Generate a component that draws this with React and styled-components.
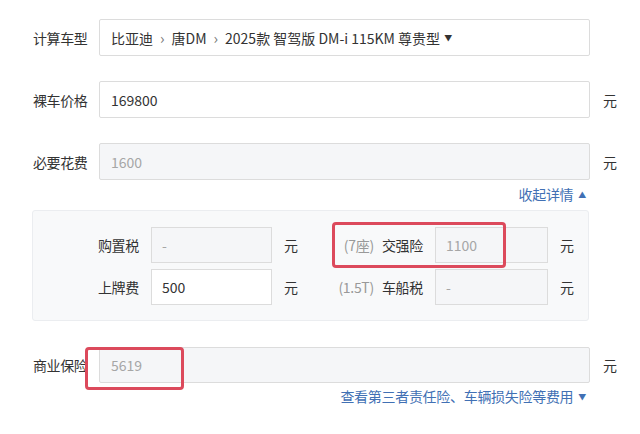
import React from 'react'
import styled, { createGlobalStyle } from 'styled-components'

const GlobalStyle = createGlobalStyle`
  html, body {
    margin: 0;
    padding: 0;
    background: #fff;
  }
  body {
    font-family: "Noto Sans CJK SC", "Noto Sans", sans-serif;
    font-size: 14px;
    color: #333;
  }
`

function App() {
  return (
    <Page>
      <GlobalStyle />

      <FormRow>
        <Label>计算车型</Label>
        <Field>
          <span>比亚迪</span>
          <Crumb>›</Crumb>
          <span>唐DM</span>
          <Crumb>›</Crumb>
          <span>2025款 智驾版 DM-i 115KM 尊贵型</span>
          <Caret>▼</Caret>
        </Field>
      </FormRow>

      <FormRow>
        <Label>裸车价格</Label>
        <Field>169800</Field>
        <Unit>元</Unit>
      </FormRow>

      <FormRow>
        <Label>必要花费</Label>
        <Field disabled>1600</Field>
        <Unit>元</Unit>
      </FormRow>

      <ToggleRow>
        <LinkText>收起详情<Arrow>▲</Arrow></LinkText>
      </ToggleRow>

      <DetailPanel>
        <DetailGrid>
          <SubLabel>购置税</SubLabel>
          <SmallField disabled>-</SmallField>
          <SubUnit>元</SubUnit>
          <SubLabel><Note>(7座)</Note>交强险</SubLabel>
          <SmallField disabled>1100</SmallField>
          <SubUnit>元</SubUnit>

          <SubLabel>上牌费</SubLabel>
          <SmallField>500</SmallField>
          <SubUnit>元</SubUnit>
          <SubLabel><Note>(1.5T)</Note>车船税</SubLabel>
          <SmallField disabled>-</SmallField>
          <SubUnit>元</SubUnit>
        </DetailGrid>
        <Highlight $left={299} $top={11} $width={174} $height={46} />
      </DetailPanel>

      <InsuranceRow>
        <Label>商业保险</Label>
        <Field disabled>5619</Field>
        <Unit>元</Unit>
        <Highlight $left={53} $top={0} $width={99} $height={43} />
      </InsuranceRow>

      <ToggleRow $tight>
        <LinkText>查看第三者责任险、车辆损失险等费用<Arrow>▼</Arrow></LinkText>
      </ToggleRow>
    </Page>
  )
}

export default App

const Page = styled.div`
  width: 640px;
  height: 434px;
  box-sizing: border-box;
  padding: 19px 0 0 32px;
  overflow: hidden;
`

const FormRow = styled.div`
  display: flex;
  align-items: center;
  margin-bottom: 25px;
  &:nth-of-type(3) {
    margin-bottom: 0;
  }
`

const Label = styled.div`
  width: 66px;
  flex: none;
  padding-left: 1px;
  color: #333;
  white-space: nowrap;
  letter-spacing: -0.4px;
`

const Field = styled.div`
  width: 491px;
  height: 37px;
  box-sizing: border-box;
  display: flex;
  align-items: center;
  padding-left: 11px;
  border: 1px solid #dcdcdc;
  border-radius: 2px;
  background: ${p => (p.disabled ? '#f5f6f8' : '#fff')};
  color: ${p => (p.disabled ? '#a6a6a6' : '#333')};
  white-space: nowrap;
`

const Crumb = styled.span`
  color: #777;
  margin: 0 7px;
  font-size: 15px;
`

const Caret = styled.span`
  font-size: 8px;
  margin-left: 4px;
  color: #333;
`

const Unit = styled.div`
  margin-left: 13px;
  color: #333;
`

const ToggleRow = styled.div`
  width: 554px;
  height: 20px;
  line-height: 20px;
  text-align: right;
  margin: ${p => (p.$tight ? '3px 0 0' : '4px 0 6px')};
`

const LinkText = styled.span`
  color: #4170b4;
  font-size: 14px;
  letter-spacing: -0.3px;
`

const Arrow = styled.span`
  font-size: 8px;
  margin-left: 5px;
  vertical-align: 2px;
`

const DetailPanel = styled.div`
  position: relative;
  width: 557px;
  box-sizing: border-box;
  padding: 16px 0 15px;
  background: #f8f9fa;
  border: 1px solid #ebedf0;
  border-radius: 3px;
`

const DetailGrid = styled.div`
  display: grid;
  grid-template-columns: 106px 121px 14px 113px 113px 14px;
  column-gap: 12px;
  row-gap: 6px;
  align-items: center;
`

const SubLabel = styled.div`
  text-align: right;
  color: #333;
  white-space: nowrap;
  letter-spacing: -0.3px;
`

const Note = styled.span`
  color: #999;
  margin-right: 8px;
`

const SmallField = styled.div`
  height: 36px;
  box-sizing: border-box;
  display: flex;
  align-items: center;
  padding-left: 10px;
  border: 1px solid #dcdcdc;
  background: ${p => (p.disabled ? '#f5f6f8' : '#fff')};
  color: ${p => (p.disabled ? '#a6a6a6' : '#333')};
`

const SubUnit = styled.div`
  color: #333;
`

const InsuranceRow = styled(FormRow)`
  position: relative;
  margin: 26px 0 0;
  & > ${Field} {
    height: 36px;
  }
`

const Highlight = styled.div`
  position: absolute;
  left: ${p => p.$left}px;
  top: ${p => p.$top}px;
  width: ${p => p.$width}px;
  height: ${p => p.$height}px;
  box-sizing: border-box;
  border: 3px solid #dc4a5c;
  border-radius: 4px;
  pointer-events: none;
`
